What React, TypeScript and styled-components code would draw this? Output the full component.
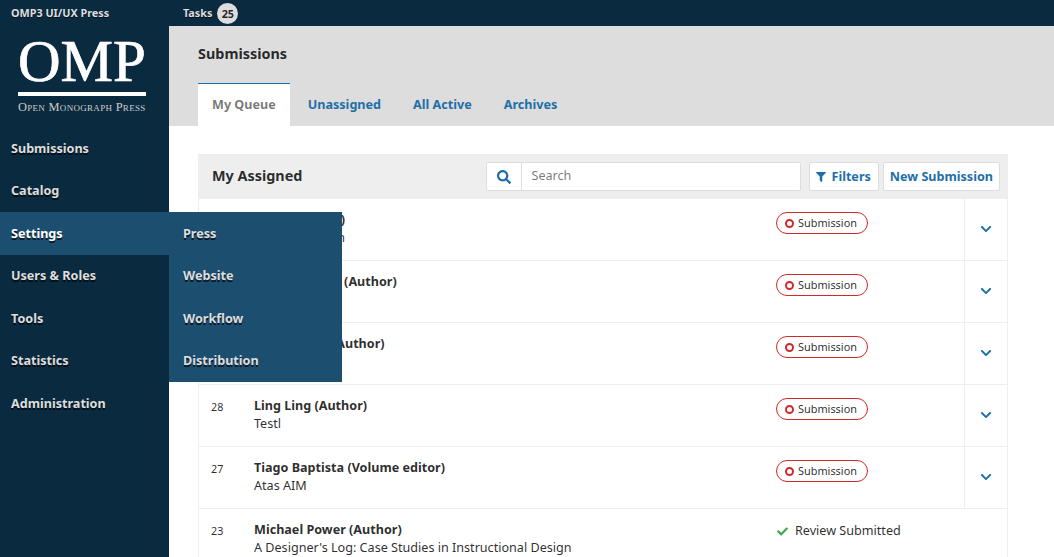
import { createGlobalStyle } from 'styled-components';
import styled from 'styled-components';
import { FaCheck, FaChevronDown, FaFilter, FaSearch } from 'react-icons/fa';

interface Submission {
  id: number;
  author: string;
  title: string;
  stage?: string;
  review?: string;
}

const submissions: Submission[] = [
  { id: 33, author: 'Jane Li (Editor)', title: 'Test subsection', stage: 'Submission' },
  { id: 32, author: 'Daniel Barnes (Author)', title: 'Testing', stage: 'Submission' },
  { id: 31, author: 'Ling Ling Ly (Author)', title: 'Test', stage: 'Submission' },
  { id: 28, author: 'Ling Ling (Author)', title: 'Testl', stage: 'Submission' },
  { id: 27, author: 'Tiago Baptista (Volume editor)', title: 'Atas AIM', stage: 'Submission' },
  {
    id: 23,
    author: 'Michael Power (Author)',
    title: "A Designer's Log: Case Studies in Instructional Design",
    review: 'Review Submitted',
  },
];

const navItems = ['Submissions', 'Catalog', 'Settings', 'Users & Roles', 'Tools', 'Statistics', 'Administration'];
const settingsItems = ['Press', 'Website', 'Workflow', 'Distribution'];
const tabs = ['My Queue', 'Unassigned', 'All Active', 'Archives'];

const App = () => {
  return (
    <>
      <GlobalStyle />
      <Page>
        <TopBar>
          <PressName>OMP3 UI/UX Press</PressName>
          <Tasks>
            <span>Tasks</span>
            <TaskCount>25</TaskCount>
          </Tasks>
        </TopBar>
        <Body>
          <Sidebar>
            <Logo>
              <LogoMark>OMP</LogoMark>
              <LogoRule />
              <LogoName>Open Monograph Press</LogoName>
            </Logo>
            <Nav>
              {navItems.map((item) => (
                <NavItem key={item} $active={item === 'Settings'}>
                  {item}
                </NavItem>
              ))}
            </Nav>
            <SubMenu>
              {settingsItems.map((item) => (
                <SubMenuItem key={item}>{item}</SubMenuItem>
              ))}
            </SubMenu>
          </Sidebar>
          <Main>
            <PageHeader>
              <PageTitle>Submissions</PageTitle>
              <Tabs>
                {tabs.map((tab) => (
                  <Tab key={tab} $active={tab === 'My Queue'}>
                    {tab}
                  </Tab>
                ))}
              </Tabs>
            </PageHeader>
            <Content>
              <ListHeader>
                <ListTitle>My Assigned</ListTitle>
                <SearchBox>
                  <SearchIcon>
                    <FaSearch size={14} />
                  </SearchIcon>
                  <SearchInput>Search</SearchInput>
                </SearchBox>
                <Actions>
                  <FilterButton>
                    <FaFilter size={10} />
                    Filters
                  </FilterButton>
                  <ActionButton>New Submission</ActionButton>
                </Actions>
              </ListHeader>
              {submissions.map((item) => (
                <Row key={item.id}>
                  <RowId>{item.id}</RowId>
                  <RowText>
                    <Author>{item.author}</Author>
                    <Title>{item.title}</Title>
                  </RowText>
                  <RowStatus>
                    {item.stage && (
                      <StageBadge>
                        <StageDot />
                        {item.stage}
                      </StageBadge>
                    )}
                    {item.review && (
                      <ReviewStatus>
                        <FaCheck size={11} color="#3ca84f" />
                        {item.review}
                      </ReviewStatus>
                    )}
                  </RowStatus>
                  {item.stage && (
                    <Expander>
                      <FaChevronDown size={12} />
                    </Expander>
                  )}
                </Row>
              ))}
            </Content>
          </Main>
        </Body>
      </Page>
    </>
  );
};

const GlobalStyle = createGlobalStyle`
  html, body {
    margin: 0;
    height: 100%;
    overflow: hidden;
    background: #fff;
  }
  body {
    font-family: "Noto Sans", "Open Sans", sans-serif;
    font-size: 12.6px;
    color: rgba(0, 0, 0, 0.84);
  }
`;

const Page = styled.div`
  display: flex;
  flex-direction: column;
  height: 557px;
  overflow: hidden;
`;

const TopBar = styled.header`
  display: flex;
  align-items: center;
  height: 26px;
  flex: none;
  background: #0a2a3f;
  color: #ddd;
  font-size: 10.8px;
  font-weight: 700;
  text-shadow: 0 1px 0 rgba(0, 0, 0, 0.6);
`;

const PressName = styled.div`
  width: 183px;
  padding: 0 0 2px 11px;
  box-sizing: border-box;
`;

const Tasks = styled.div`
  display: flex;
  align-items: center;
  gap: 5px;

  span:first-child {
    padding-bottom: 2px;
  }
`;

const TaskCount = styled.span`
  display: flex;
  align-items: center;
  justify-content: center;
  width: 21px;
  height: 21px;
  border-radius: 50%;
  background: #ddd;
  color: rgba(0, 0, 0, 0.84);
  font-size: 10.8px;
  text-shadow: none;
`;

const Body = styled.div`
  display: flex;
  flex: 1;
  min-height: 0;
`;

const Sidebar = styled.aside`
  position: relative;
  flex: none;
  width: 169px;
  background: #0a2a3f;
`;

const Logo = styled.div`
  display: flex;
  flex-direction: column;
  width: 128px;
  margin-left: 18px;
  padding-top: 6px;
  color: #fff;
`;

const LogoMark = styled.div`
  font-family: "Liberation Serif", serif;
  font-size: 59px;
  line-height: 59px;
  height: 60px;
  white-space: nowrap;
  -webkit-text-stroke: 0.7px #fff;
`;

const LogoRule = styled.div`
  height: 4px;
  background: #fff;
`;

const LogoName = styled.div`
  margin-top: 5px;
  font-family: "Liberation Serif", serif;
  font-variant: small-caps;
  font-size: 12.4px;
  line-height: 12px;
  white-space: nowrap;
  color: #ccc;
  letter-spacing: 0.3px;
`;

const Nav = styled.nav`
  margin-top: 14px;
`;

const NavItem = styled.div<{ $active: boolean }>`
  display: flex;
  align-items: center;
  height: 42.5px;
  padding-left: 11px;
  font-size: 12.6px;
  font-weight: 700;
  color: ${(props) => (props.$active ? '#fff' : '#ddd')};
  background: ${(props) => (props.$active ? '#1c4e70' : 'transparent')};
  text-shadow: 0 2px 0 rgba(0, 0, 0, 0.7);
`;

const SubMenu = styled.div`
  position: absolute;
  left: 169px;
  top: 186px;
  width: 173px;
  z-index: 2;
  background: #1c4e70;
`;

const SubMenuItem = styled.div`
  display: flex;
  align-items: center;
  height: 42.5px;
  padding-left: 14px;
  font-size: 12.6px;
  font-weight: 700;
  color: #ddd;
  text-shadow: 0 2px 0 rgba(0, 0, 0, 0.7);
`;

const Main = styled.main`
  flex: 1;
  min-width: 0;
`;

const PageHeader = styled.div`
  height: 100px;
  box-sizing: border-box;
  padding: 17px 0 0 29px;
  background: #ddd;
`;

const PageTitle = styled.h1`
  margin: 0 0 19px;
  font-size: 14.4px;
  line-height: 21px;
  font-weight: 700;
`;

const Tabs = styled.div`
  display: flex;
`;

const Tab = styled.div<{ $active: boolean }>`
  display: flex;
  align-items: center;
  height: 43px;
  box-sizing: border-box;
  padding: 0 14px ${(props) => (props.$active ? '2px' : '0')};
  margin-right: 4px;
  font-size: 12.6px;
  font-weight: 700;
  color: ${(props) => (props.$active ? 'rgba(0, 0, 0, 0.54)' : '#1e6fa8')};
  background: ${(props) => (props.$active ? '#fff' : 'transparent')};
  border-top: ${(props) => (props.$active ? '1px solid #1e6fa8' : 'none')};
`;

const Content = styled.div`
  width: 810px;
  margin: 28px 0 0 29px;
`;

const ListHeader = styled.div`
  display: flex;
  align-items: center;
  height: 45px;
  background: #eee;
  padding: 0 8px 0 14px;
`;

const ListTitle = styled.div`
  flex: 1;
  font-size: 14.4px;
  font-weight: 700;
  padding-bottom: 3px;
`;

const SearchBox = styled.div`
  display: flex;
  width: 315px;
  height: 29px;
  box-sizing: border-box;
  border: 1px solid #ddd;
  background: #fff;
  border-radius: 2px;
`;

const SearchIcon = styled.div`
  display: flex;
  align-items: center;
  justify-content: center;
  width: 34px;
  flex: none;
  color: #1e6fa8;
  border-right: 1px solid #ddd;
`;

const SearchInput = styled.div`
  padding: 0 0 2px 9px;
  display: flex;
  align-items: center;
  font-size: 12.6px;
  color: rgba(0, 0, 0, 0.54);
`;

const Actions = styled.div`
  display: flex;
  gap: 4px;
  margin-left: 8px;
`;

const ActionButton = styled.div`
  display: flex;
  align-items: center;
  gap: 5px;
  height: 29px;
  box-sizing: border-box;
  padding: 0 6px;
  border: 1px solid #ddd;
  border-radius: 2px;
  background: #fff;
  color: #1e6fa8;
  font-size: 12.6px;
  font-weight: 700;
`;

const FilterButton = styled(ActionButton)`
  padding-right: 7px;
`;

const Row = styled.div`
  display: flex;
  height: 62px;
  box-sizing: border-box;
  border: 1px solid #eee;
  border-top: none;
`;

const RowId = styled.div`
  width: 55px;
  flex: none;
  padding: 13px 0 0 12px;
  box-sizing: border-box;
  font-size: 10.8px;
  line-height: 18px;
`;

const RowText = styled.div`
  width: 522px;
  flex: none;
  padding-top: 11px;
`;

const Author = styled.div`
  font-size: 12.6px;
  line-height: 19px;
  font-weight: 700;
  white-space: nowrap;
`;

const Title = styled.div`
  font-size: 12.6px;
  line-height: 18px;
  white-space: nowrap;
`;

const RowStatus = styled.div`
  flex: 1;
  padding-top: 13px;
`;

const StageBadge = styled.div`
  display: inline-flex;
  align-items: center;
  gap: 4px;
  height: 22px;
  box-sizing: border-box;
  padding: 0 10px 1px 8px;
  border: 1px solid #d0292b;
  border-radius: 12px;
  font-size: 10.9px;
`;

const StageDot = styled.span`
  width: 9px;
  height: 9px;
  margin-top: 1px;
  box-sizing: border-box;
  border: 2.5px solid #d0292b;
  border-radius: 50%;
`;

const ReviewStatus = styled.div`
  display: flex;
  align-items: center;
  gap: 7px;
  padding: 0 0 0 1px;
  margin-top: -1px;
  font-size: 12.6px;
  line-height: 20px;
`;

const Expander = styled.div`
  display: flex;
  align-items: center;
  justify-content: center;
  width: 43px;
  box-sizing: border-box;
  flex: none;
  padding-bottom: 2px;
  color: #1e6fa8;
  border-left: 1px solid #eee;
`;

export default App;
